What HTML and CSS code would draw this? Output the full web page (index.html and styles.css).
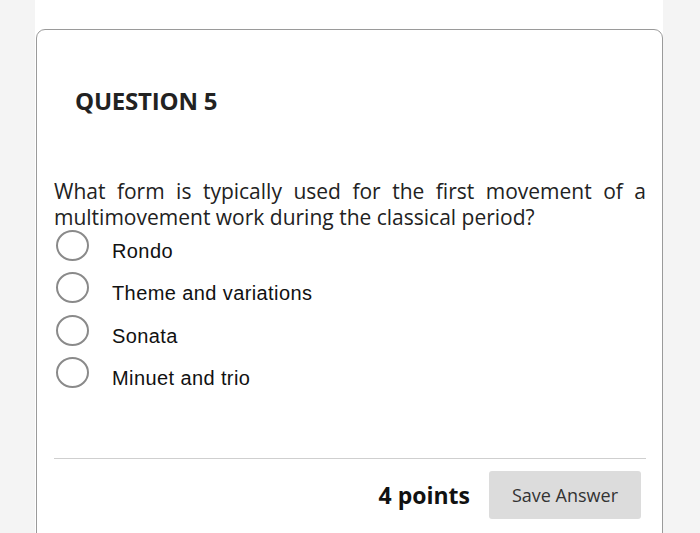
FILE: index.html
```html
<!DOCTYPE html>
<html>
<head>
<meta charset="utf-8">
<link rel="stylesheet" href="styles.css">
</head>
<body>
<div class="page">
  <div class="card">
    <h2 class="title">QUESTION 5</h2>
    <p class="question">What form is typically used for the first movement of a multimovement work during the classical period?</p>
    <ul class="options">
      <li class="option"><span class="radio"></span><span class="label">Rondo</span></li>
      <li class="option"><span class="radio"></span><span class="label">Theme and variations</span></li>
      <li class="option"><span class="radio"></span><span class="label">Sonata</span></li>
      <li class="option"><span class="radio"></span><span class="label">Minuet and trio</span></li>
    </ul>
    <div class="footer">
      <span class="points">4 points</span>
      <button class="save">Save Answer</button>
    </div>
  </div>
</div>
</body>
</html>
```

FILE: styles.css
```css
html, body {
  margin: 0;
  padding: 0;
  background: #f4f4f4;
  overflow: hidden;
}
.page {
  width: 628px;
  margin-left: 35px;
  background: #ffffff;
  padding-top: 29px;
  height: 504px;
}
.card {
  margin-left: 1px;
  border: 1.5px solid #9a9a9a;
  border-radius: 9px;
  height: 520px;
  padding: 0 16px 0 17px;
  font-family: "Open Sans", sans-serif;
  color: #222;
}
.title {
  margin: 56px 0 0 21px;
  font-size: 24px;
  line-height: 30px;
  font-weight: 700;
  letter-spacing: -0.2px;
  color: #222;
}
.question {
  margin: 62px 0 0 0;
  font-size: 21px;
  line-height: 26px;
  text-align: justify;
  color: #222;
}
.options {
  list-style: none;
  margin: -2px 0 0 0;
  padding: 0;
}
.option {
  display: flex;
  align-items: center;
  height: 42.5px;
}
.radio {
  width: 29px;
  height: 27px;
  border: 2px solid #8a8a8a;
  border-radius: 50%;
  margin-left: 2px;
  margin-top: -8px;
  flex: none;
}
.label {
  margin-left: 23px;
  padding-top: 4px;
  font-family: "Liberation Sans", Arial, sans-serif;
  font-size: 20px;
  letter-spacing: 0.4px;
  color: #111;
}
.footer {
  margin-top: 60px;
  border-top: 1.5px solid #cfcfcf;
  display: flex;
  justify-content: flex-end;
  align-items: center;
  padding: 12px 5px 0 0;
  gap: 19px;
}
.points {
  font-weight: 700;
  font-size: 23px;
  color: #111;
}
.save {
  width: 152px;
  height: 48px;
  border: none;
  border-radius: 3px;
  background: #dcdcdc;
  font-family: "Open Sans", sans-serif;
  font-size: 18px;
  color: #333;
}
```
